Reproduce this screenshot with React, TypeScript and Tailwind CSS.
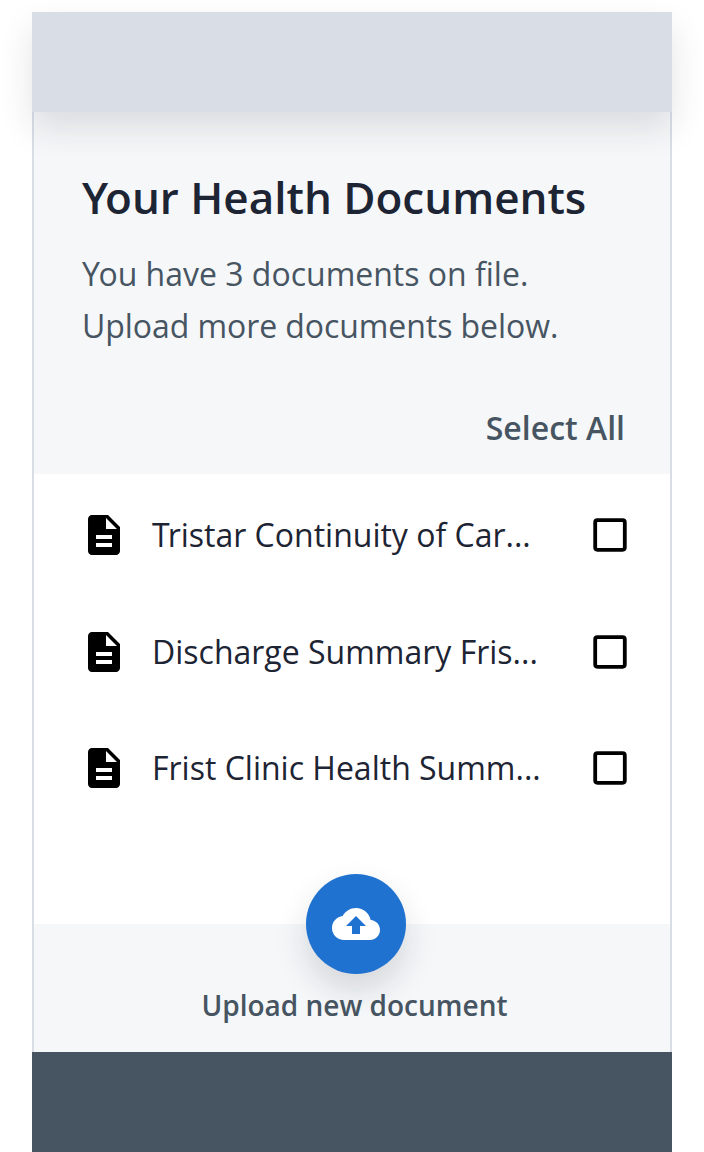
const docs = [
  { first: "T", rest: "ristar Continuity of Car...", kern: "tracking-[-2px]" },
  { first: "D", rest: "ischarge Summary Fris...", kern: "" },
  { first: "F", rest: "rist Clinic Health Summ...", kern: "" },
];

function DocIcon() {
  return (
    <svg viewBox="0 0 24 24" className="h-12 w-12 shrink-0" fill="black">
      <path d="M14 2H6c-1.1 0-1.99.9-1.99 2L4 20c0 1.1.89 2 1.99 2H18c1.1 0 2-.9 2-2V8l-6-6zm2 16H8v-2h8v2zm0-4H8v-2h8v2zm-3-5V3.500L18.500 9H13z" />
    </svg>
  );
}

export default function App() {
  return (
    <div className="h-[1152px] w-[704px] overflow-hidden bg-white px-8 pt-3 font-['Open_Sans',sans-serif]">
      <header className="relative z-10 h-[100px] bg-[#d8dde6] shadow-[0_16px_32px_rgba(29,33,41,0.12)]" />
      <main className="flex h-[940px] flex-col border-x-2 border-[#d8dde6]">
        <section className="h-[362px] bg-[#f5f7f9] px-12 pt-[59px]">
          <h1 className="text-[44px] leading-[52px] font-semibold whitespace-nowrap text-[#1d2433]">
            <span className="tracking-[-3px]">Y</span>our Health Documents
          </h1>
          <p className="mt-[25px] text-[32px] leading-[52px] whitespace-nowrap text-[#475562]">
            <span className="tracking-[-1.500px]">Y</span>ou have 3 documents on file.
            <br />
            <span className="tracking-[-0.070px]">Upload more documents below.</span>
          </p>
          <div className="-mr-[3px] mt-[50px] text-right text-[32px] leading-[52px] font-semibold text-[#475562]">Select All</div>
        </section>
        <ul className="h-[450px] bg-white pt-[3px]">
          {docs.map((d) => (
            <li key={d.rest} className="flex h-[116.500px] items-center pr-9 pl-[46px]">
              <DocIcon />
              <span className="ml-6 flex-1 text-[32px] leading-[48px] whitespace-nowrap text-[#1d2433]">
                <span className={d.kern}>{d.first}</span>
                {d.rest}
              </span>
              <svg viewBox="0 0 40 40" className="mr-1 h-10 w-10 shrink-0" fill="none" stroke="black">
                <rect x="5.200" y="5.200" width="29.600" height="29.600" rx="2.200" strokeWidth="3.800" />
              </svg>
            </li>
          ))}
        </ul>
        <section className="flex h-32 flex-col items-center bg-[#f5f7f9]">
          <button className="relative left-1 -mt-[50px] flex h-[100px] w-[100px] shrink-0 items-center justify-center rounded-full bg-[#1f72d0] shadow-[0_16px_32px_rgba(29,33,41,0.15)]">
            <svg viewBox="0 0 24 24" className="h-12 w-12" fill="white">
              <path d="M19.350 10.040C18.670 6.590 15.640 4 12 4 9.110 4 6.600 5.640 5.350 8.040 2.340 8.360 0 10.910 0 14c0 3.310 2.690 6 6 6h13c2.760 0 5-2.240 5-5 0-2.640-2.050-4.780-4.650-4.960zM14 13v4h-4v-4H7l5-5 5 5h-3z" />
            </svg>
          </button>
          <div className="mt-[11px] pl-[5px] text-[28px] leading-10 font-semibold text-[#475562]">Upload new document</div>
        </section>
      </main>
      <footer className="h-[100px] bg-[#475562]" />
    </div>
  );
}
